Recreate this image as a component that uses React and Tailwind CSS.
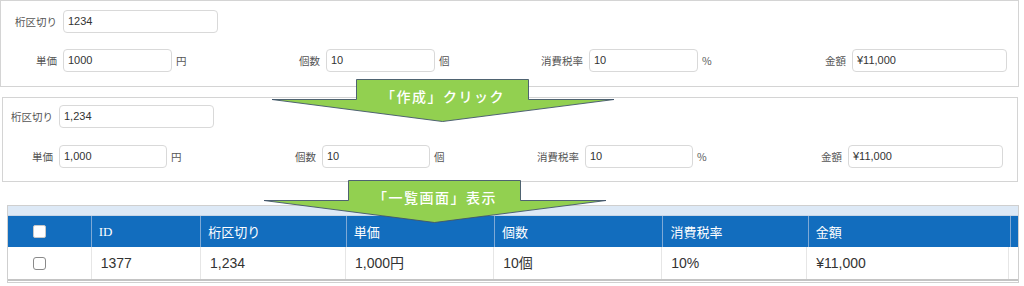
// Render the before/after form demo with the resulting list table.

const jp = { fontFamily: '"Noto Sans CJK JP", "Liberation Sans", sans-serif' };
const num = { fontFamily: '"Liberation Sans", "Noto Sans CJK JP", sans-serif' };

// Render the text input component.
function Field({ value, width }) {
  return (
    <div
      className="h-[23px] border border-[#d9d9d9] rounded-[4px] bg-white flex items-center pl-[4px] text-[11px] text-[#333]"
      style={{ ...num, width }}>
      {value}
    </div>);

}

// Render the form panel component.
function FormPanel({ v, labelW, pt, gap, pb, wide, narrow, className = '' }) {
  const cols = [
  { label: '単価', value: v.price, unit: '円' },
  { label: '個数', value: v.qty, unit: '個' },
  { label: '消費税率', value: v.tax, unit: '%' },
  { label: '金額', value: v.total }];

  return (
    <div className={['border border-[#d4d4d4] bg-white', className].join(' ')} style={{ paddingTop: pt, paddingBottom: pb }}>
      <div className="flex items-center">
        <div className="text-right text-[10.5px] text-[#555] pr-[6px]" style={{ ...jp, width: labelW }}>桁区切り</div>
        <Field value={v.sep} width={wide} />
      </div>
      <div className="flex" style={{ marginTop: gap }}>
        {cols.map((c, i) =>
        <div key={i} className="w-[263px] shrink-0 flex items-center">
            <div className="text-right text-[10.5px] text-[#555] pr-[6px]" style={{ ...jp, width: labelW }}>{c.label}</div>
            <Field value={c.value} width={c.unit ? narrow : wide} />
            {c.unit && <span className="ml-[4px] text-[10.5px] text-[#555]" style={jp}>{c.unit}</span>}
          </div>
        )}
      </div>
    </div>);

}

// Render the green down arrow callout component.
function Arrow({ left, top, text }) {
  return (
    <div className="absolute w-[344px] h-[44px]" style={{ left, top }}>
      <svg width="344" height="44" viewBox="0 0 344 44" className="absolute inset-0">
        <polygon
          points="85.5,0.5 257.5,0.5 257.5,20.5 343,20.5 171.5,42.5 1,20.5 85.5,20.5"
          fill="#92d050"
          stroke="#41536b"
          strokeWidth="0.9" />
      </svg>
      <div
        className="absolute left-0 right-0 top-[7px] text-center text-white text-[14px] font-medium tracking-[1.5px]"
        style={jp}>
        {text}
      </div>
    </div>);

}

const widths = [83, 110, 146, 149, 169, 146, 203, 5];
const heads = ['', 'ID', '桁区切り', '単価', '個数', '消費税率', '金額', ''];
const cells = ['', '1377', '1,234', '1,000円', '10個', '10%', '¥11,000', ''];

// Render the list table component.
function ListTable() {
  return (
    <div className="ml-[7px] w-[1012px] mt-[23px] border-x border-t border-[#cfcfcf]">
      <div className="h-[10px] bg-[#dde9f6] border-b border-[#c9d6e6]" />
      <div className="flex h-[31px] bg-[#126dbe]">
        {widths.map((w, i) =>
        <div
          key={i}
          className={['flex items-center text-white text-[13px]', i > 0 ? 'border-l border-[#7ea9d6]' : '', i === 0 ? 'pl-[25px]' : 'pl-[7px]'].join(' ')}
          style={{ width: w, ...(i === 1 ? { fontFamily: '"Liberation Serif", serif' } : jp) }}>
            {i === 0 ?
          <div className="w-[13px] h-[13px] bg-white rounded-[2px] border border-[#c8c8c8]" /> :
          heads[i]}
          </div>
        )}
      </div>
      <div className="flex h-[34px] bg-white border-b-2 border-[#c4c4c4]">
        {widths.map((w, i) =>
        <div
          key={i}
          className={['flex items-center text-[#333] text-[14px]', i > 0 ? 'border-l border-[#e6e6e6]' : '', i === 0 ? 'pl-[25px]' : 'pl-[9px]'].join(' ')}
          style={{ width: w, ...num }}>
            {i === 0 ?
          <div className="w-[13px] h-[13px] bg-white rounded-[3px] border border-[#8a8a8a]" /> :
          cells[i]}
          </div>
        )}
      </div>
      <div className="h-[2px] bg-white border-b border-[#d0d0d0]" />
    </div>);

}

export default function App() {
  return (
    <div className="relative w-[1024px] h-[286px] overflow-hidden bg-white">
      <FormPanel
        className="w-[1019px]"
        v={{ sep: '1234', price: '1000', qty: '10', tax: '10', total: '¥11,000' }}
        labelW={62}
        pt={9}
        gap={16}
        pb={14}
        wide={155}
        narrow={109} />
      <FormPanel
        className="w-[1016px] ml-[2px] mt-[10px]"
        v={{ sep: '1,234', price: '1,000', qty: '10', tax: '10', total: '¥11,000' }}
        labelW={56}
        pt={7}
        gap={17}
        pb={13}
        wide={155}
        narrow={108} />
      <ListTable />
      <Arrow left={271} top={79} text="「作成」クリック" />
      <Arrow left={263} top={180} text="「一覧画面」表示" />
    </div>);

}
